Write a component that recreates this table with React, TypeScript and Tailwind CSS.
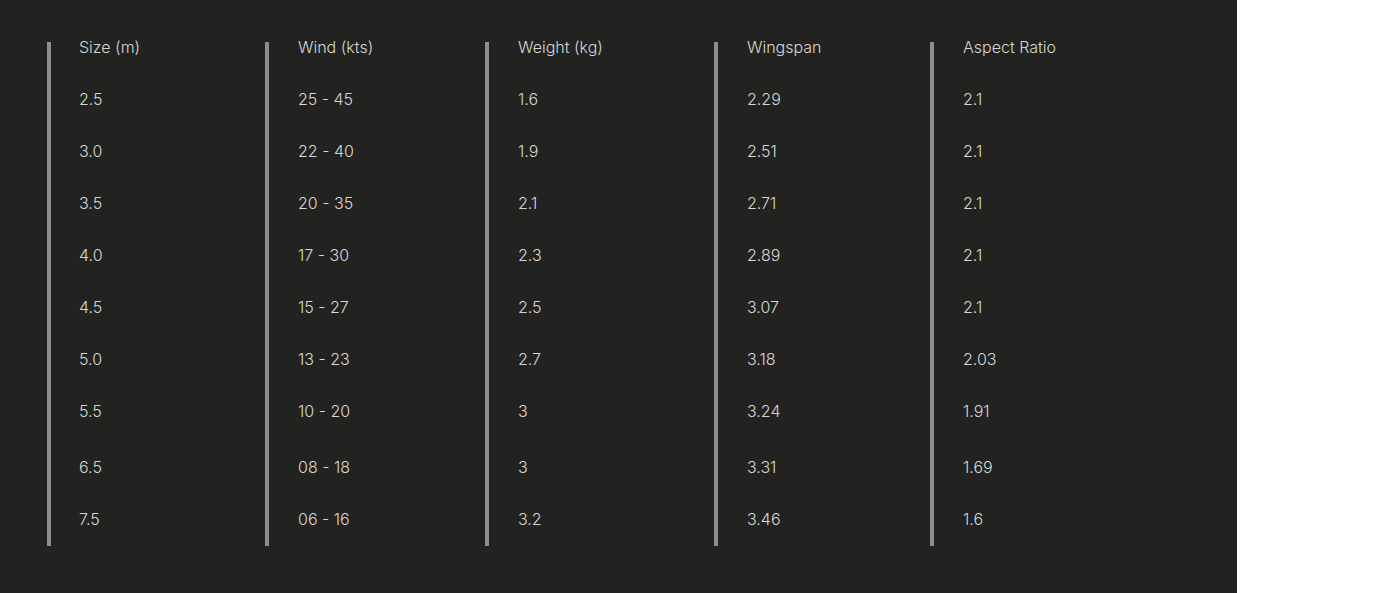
const columns = [
  { title: 'Size (m)', width: 'w-[218px]', pad: 'pl-[28px]', values: ['2.5', '3.0', '3.5', '4.0', '4.5', '5.0', '5.5', '6.5', '7.5'] },
  { title: 'Wind (kts)', width: 'w-[220px]', pad: 'pl-[29px]', values: ['25 - 45', '22 - 40', '20 - 35', '17 - 30', '15 - 27', '13 - 23', '10 - 20', '08 - 18', '06 - 16'] },
  { title: 'Weight (kg)', width: 'w-[229px]', pad: 'pl-[29px]', values: ['1.6', '1.9', '2.1', '2.3', '2.5', '2.7', '3', '3', '3.2'] },
  { title: 'Wingspan', width: 'w-[216px]', pad: 'pl-[29px]', values: ['2.29', '2.51', '2.71', '2.89', '3.07', '3.18', '3.24', '3.31', '3.46'] },
  { title: 'Aspect Ratio', width: 'w-[216px]', pad: 'pl-[29px]', values: ['2.1', '2.1', '2.1', '2.1', '2.1', '2.03', '1.91', '1.69', '1.6'] },
]

export default function App() {
  return (
    <div className="flex h-[593px] w-[1382px] bg-white">
      <div
        className="h-full w-[1237px] bg-[#222321] pl-[47px] pt-[42px] text-[16px] font-light text-[#d6d6d4]"
        style={{ fontFamily: 'Inter, "Liberation Sans", sans-serif' }}
      >
        <div className="flex">
          {columns.map((col) => (
            <div key={col.title} className={col.width}>
              <div className={`flex h-[504px] flex-col border-l-4 border-[#8d8d8b] ${col.pad}`}>
                <div className="-mt-[5px] h-[20px] leading-[20px]">{col.title}</div>
                <div className="mt-[16px]">
                  {col.values.map((v, i) => (
                    <div key={i} className={i === 7 ? 'h-[56px] pt-[4px] leading-[52px]' : 'h-[52px] leading-[52px]'}>
                      {v}
                    </div>
                  ))}
                </div>
              </div>
            </div>
          ))}
        </div>
      </div>
    </div>
  )
}
